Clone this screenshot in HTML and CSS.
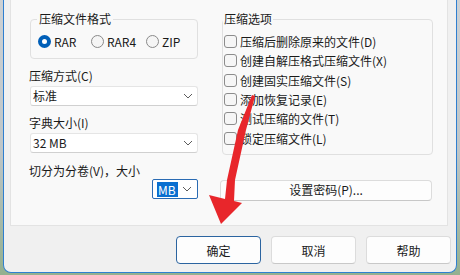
FILE: index.html
```html
<!DOCTYPE html>
<html lang="zh-CN">
<head>
<meta charset="utf-8">
<title>压缩文件名和参数</title>
<link rel="stylesheet" href="styles.css">
</head>
<body>
<div class="window">
  <div class="pane">
    <div class="col-left">
      <fieldset class="group fmt">
        <legend>压缩文件格式</legend>
        <div class="radios">
          <label class="radio r1"><span class="dot checked"></span>RAR</label>
          <label class="radio r2"><span class="dot"></span>RAR4</label>
          <label class="radio r3"><span class="dot"></span>ZIP</label>
        </div>
      </fieldset>
      <div class="label">压缩方式(C)</div>
      <div class="select"><span class="val">标准</span><svg class="chev" width="10" height="6" viewBox="0 0 10 6"><polyline points="1,1 5,5 9,1" fill="none" stroke="#5c5c5c" stroke-width="1"/></svg></div>
      <div class="label">字典大小(I)</div>
      <div class="select"><span class="val">32 MB</span><svg class="chev" width="10" height="6" viewBox="0 0 10 6"><polyline points="1,1 5,5 9,1" fill="none" stroke="#5c5c5c" stroke-width="1"/></svg></div>
      <div class="label label-split">切分为分卷(V)，大小</div>
      <div class="split-row">
        <div class="select small focus"><span class="sel">MB</span><svg class="chev" width="10" height="6" viewBox="0 0 10 6"><polyline points="1,1 5,5 9,1" fill="none" stroke="#5c5c5c" stroke-width="1"/></svg></div>
      </div>
    </div>
    <div class="col-right">
      <fieldset class="group opts">
        <legend>压缩选项</legend>
        <label class="check"><span class="box"></span>压缩后删除原来的文件(D)</label>
        <label class="check"><span class="box"></span>创建自解压格式压缩文件(X)</label>
        <label class="check"><span class="box"></span>创建固实压缩文件(S)</label>
        <label class="check"><span class="box"></span>添加恢复记录(E)</label>
        <label class="check"><span class="box"></span>测试压缩的文件(T)</label>
        <label class="check"><span class="box"></span>锁定压缩文件(L)</label>
      </fieldset>
      <button class="btn pwd">设置密码(P)...</button>
    </div>
  </div>
  <div class="actions">
    <button class="btn act default">确定</button>
    <button class="btn act">取消</button>
    <button class="btn act">帮助</button>
  </div>
</div>
<svg class="arrow" width="460" height="275" viewBox="0 0 460 275">
  <polygon points="252,95 255,96 246,130 235,180 234,201 242,203 221,224 209,195 225,199 227,180 238,130" fill="#e8262b"/>
</svg>
</body>
</html>
```
FILE: styles.css
```css
* { box-sizing: border-box; }
html, body { margin: 0; padding: 0; }
body {
  width: 460px;
  height: 275px;
  overflow: hidden;
  position: relative;
  background: linear-gradient(to bottom, #cdd1d4 0%, #bfc6c8 55%, #94b08f 100%);
  font-family: "Noto Sans CJK SC", "Noto Sans", sans-serif;
  font-size: 12px;
  color: #1a1a1a;
}
.window {
  margin-left: 3px;
  width: 454px;
  height: 273px;
  background: #f0f0f0;
  border: 1px solid #2f7fd0;
  border-top: none;
  border-radius: 0 0 8px 8px;
  display: flex;
  flex-direction: column;
}
.pane {
  margin-left: 6px;
  width: 438px;
  height: 226px;
  background: #f9f9f9;
  border: 1px solid #e3e3e3;
  border-top: none;
  padding-left: 19px;
  display: flex;
  gap: 22px;
}
.col-left {
  width: 168px;
  display: flex;
  flex-direction: column;
}
.col-right {
  width: 212px;
  display: flex;
  flex-direction: column;
}
.group {
  margin: 11px 0 0 0;
  border: 1px solid #e0e0e0;
  border-radius: 4px;
  padding: 0 7px 8px 6px;
  min-width: 0;
}
.group legend {
  padding: 0 2px;
  line-height: 16px;
  height: 16px;
}
.opts {
  margin-left: 2px;
  margin-right: -1px;
  padding: 0 0 6px 1px;
}
.opts legend {
  padding: 0 1px;
  margin-left: -1px;
}
.radios {
  display: flex;
  align-items: center;
  height: 18px;
  margin-top: 5px;
  padding-left: 1px;
}
.radio {
  display: flex;
  align-items: center;
  gap: 3px;
}
.r1 { width: 53px; }
.r2 { width: 55px; }
.dot {
  width: 13px;
  height: 13px;
  border-radius: 50%;
  border: 1px solid #8a8a8a;
  background: #f5f5f5;
}
.dot.checked {
  border: 4px solid #005fb8;
  background: #ffffff;
}
.label {
  margin-top: 9px;
  line-height: 16px;
  margin-left: -1px;
}
.label-split { margin-top: 10px; }
.select {
  margin-top: 2px;
  height: 20px;
  background: #ffffff;
  border: 1px solid #e5e5e5;
  border-bottom-color: #d0d0d0;
  border-radius: 3px;
  display: flex;
  align-items: center;
  justify-content: space-between;
  padding: 0 4px 0 2px;
}
.select .val { line-height: 16px; }
.chev { display: block; }
.split-row {
  display: flex;
  justify-content: flex-end;
}
.select.small {
  margin-top: 0;
  width: 46px;
  border: 1px solid #2a6bb3;
  border-radius: 2px;
  padding: 0 5px 0 4px;
}
.sel {
  background: #0a6fd0;
  color: #ffffff;
  line-height: 15px;
  padding: 0 2px 0 1px;
}
.check {
  display: flex;
  align-items: center;
  height: 19.3px;
  gap: 3px;
}
.check:first-of-type { margin-top: 5px; }
.box {
  width: 13px;
  height: 13px;
  border: 1px solid #8c8c8c;
  border-radius: 3px;
  background: #f6f6f6;
}
.btn {
  font-family: "Noto Sans CJK SC", "Noto Sans", sans-serif;
  font-size: 12px;
  color: #1a1a1a;
  background: #fdfdfd;
  border: 1px solid #dcdcdc;
  border-bottom-color: #c8c8c8;
  border-radius: 4px;
  padding: 0;
}
.pwd {
  margin-top: 25px;
  height: 21px;
  width: 212px;
  line-height: 18px;
}
.actions {
  display: flex;
  justify-content: flex-end;
  gap: 9px;
  padding: 10px 5px 0 0;
}
.act {
  width: 85px;
  height: 28px;
}
.act + .act { margin-left: 1px; }
.default {
  border: 1px solid #2b64a0;
}
.arrow {
  position: absolute;
  left: 0;
  top: 0;
  pointer-events: none;
}
```
